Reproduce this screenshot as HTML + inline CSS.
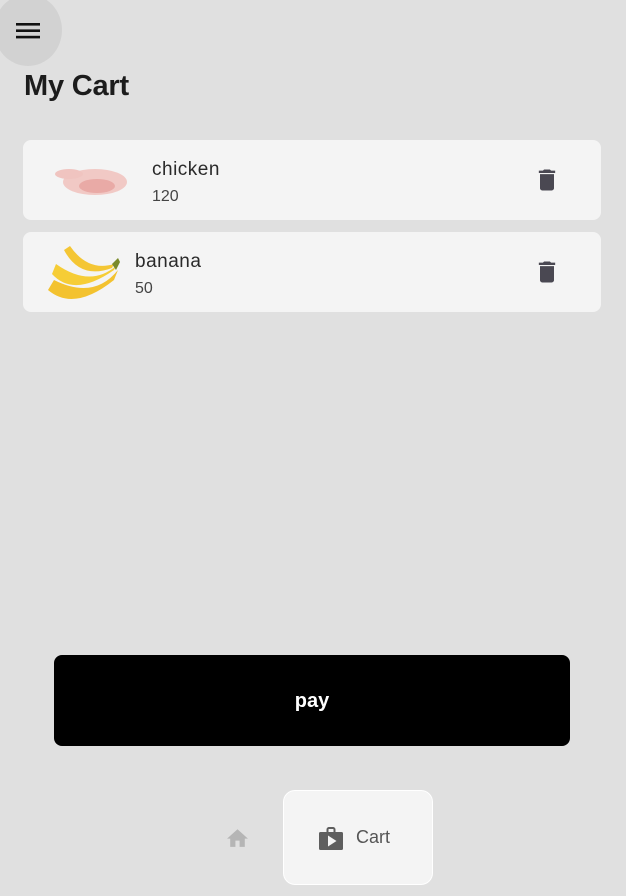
<!DOCTYPE html>
<html><head><style>
body{margin:0;width:626px;height:896px;background:#e0e0e0;font-family:"Liberation Sans",sans-serif;position:relative;overflow:hidden}
.menu{position:absolute;left:-6px;top:-6px;width:68px;height:72px;border-radius:50%;background:#d2d2d2}
h1{position:absolute;left:24px;top:70px;margin:0;font-size:29px;font-weight:bold;color:#1c1c1c;letter-spacing:-0.2px}
.card{position:absolute;left:23px;width:578px;height:80px;background:#f4f4f4;border-radius:8px}
.name{position:absolute;font-size:19px;color:#2a2a2a;letter-spacing:.5px}
.price{position:absolute;font-size:16px;color:#444}
.del{position:absolute;right:40px;top:26px}
.pay{position:absolute;left:54px;top:655px;width:516px;height:91px;background:#000;border-radius:8px;color:#fff;font-weight:bold;font-size:20px;text-align:center;line-height:93px}
.nav{position:absolute;left:283px;top:790px;width:150px;height:95px;background:#f4f4f4;border:1px solid #fff;border-radius:12px;box-sizing:border-box}
</style></head><body>
<div class="menu"></div>
<svg style="position:absolute;left:16px;top:23px" width="24" height="16"><rect x="0" y="0" width="24" height="2.6" fill="#111"/><rect x="0" y="6.4" width="24" height="2.6" fill="#111"/><rect x="0" y="12.8" width="24" height="2.6" fill="#111"/></svg>
<h1>My Cart</h1>
<div class="card" style="top:140px">
<svg style="position:absolute;left:26px;top:20px" width="82" height="38"><ellipse cx="46" cy="22" rx="32" ry="13" fill="#f1c9c5"/><ellipse cx="20" cy="14" rx="14" ry="5" fill="#f0c4c0"/><ellipse cx="48" cy="26" rx="18" ry="7" fill="#e9aaa6"/></svg>
<div class="name" style="left:129px;top:19px">chicken</div>
<div class="price" style="left:129px;top:48px">120</div>
<svg class="del" width="28" height="28" viewBox="0 0 24 24"><path d="M6 19c0 1.1.9 2 2 2h8c1.1 0 2-.9 2-2V7H6v12zM19 4h-3.5l-1-1h-5l-1 1H5v2h14V4z" fill="#4a4852"/></svg>
</div>
<div class="card" style="top:232px">
<svg style="position:absolute;left:21px;top:8px" width="78" height="64"><path d="M4 50 Q30 72 70 40 L74 30 Q50 60 10 40 Z" fill="#f3c22f"/><path d="M8 34 Q30 58 70 30 L72 26 Q46 48 12 24 Z" fill="#f6cd36"/><path d="M20 10 Q36 40 68 28 L70 24 Q44 32 26 6 Z" fill="#f4c634"/><path d="M68 24 L74 18 L76 22 L72 30Z" fill="#7a8a2a"/></svg>
<div class="name" style="left:112px;top:19px">banana</div>
<div class="price" style="left:112px;top:48px">50</div>
<svg class="del" width="28" height="28" viewBox="0 0 24 24"><path d="M6 19c0 1.1.9 2 2 2h8c1.1 0 2-.9 2-2V7H6v12zM19 4h-3.5l-1-1h-5l-1 1H5v2h14V4z" fill="#4a4852"/></svg>
</div>
<div class="pay">pay</div>
<svg style="position:absolute;left:225px;top:826px" width="25" height="22" viewBox="0 0 24 21"><path d="M10 20v-6h4v6h5v-8h3L12 3 2 12h3v8z" fill="#b5b5b5"/></svg>
<div class="nav">
<svg style="position:absolute;left:34px;top:34px" width="26" height="26" viewBox="0 0 26 26"><path d="M9.5 7V4.5a1.5 1.5 0 0 1 1.5-1.5h4a1.5 1.5 0 0 1 1.5 1.5V7" fill="none" stroke="#5e5e5e" stroke-width="2"/><rect x="1" y="7" width="24" height="18" rx="1.5" fill="#5e5e5e"/><path d="M10 10.5v11l8.5-5.5z" fill="#f4f4f4"/></svg>
<div style="position:absolute;left:72px;top:36px;font-size:18px;color:#555">Cart</div>
</div>
</body></html>
